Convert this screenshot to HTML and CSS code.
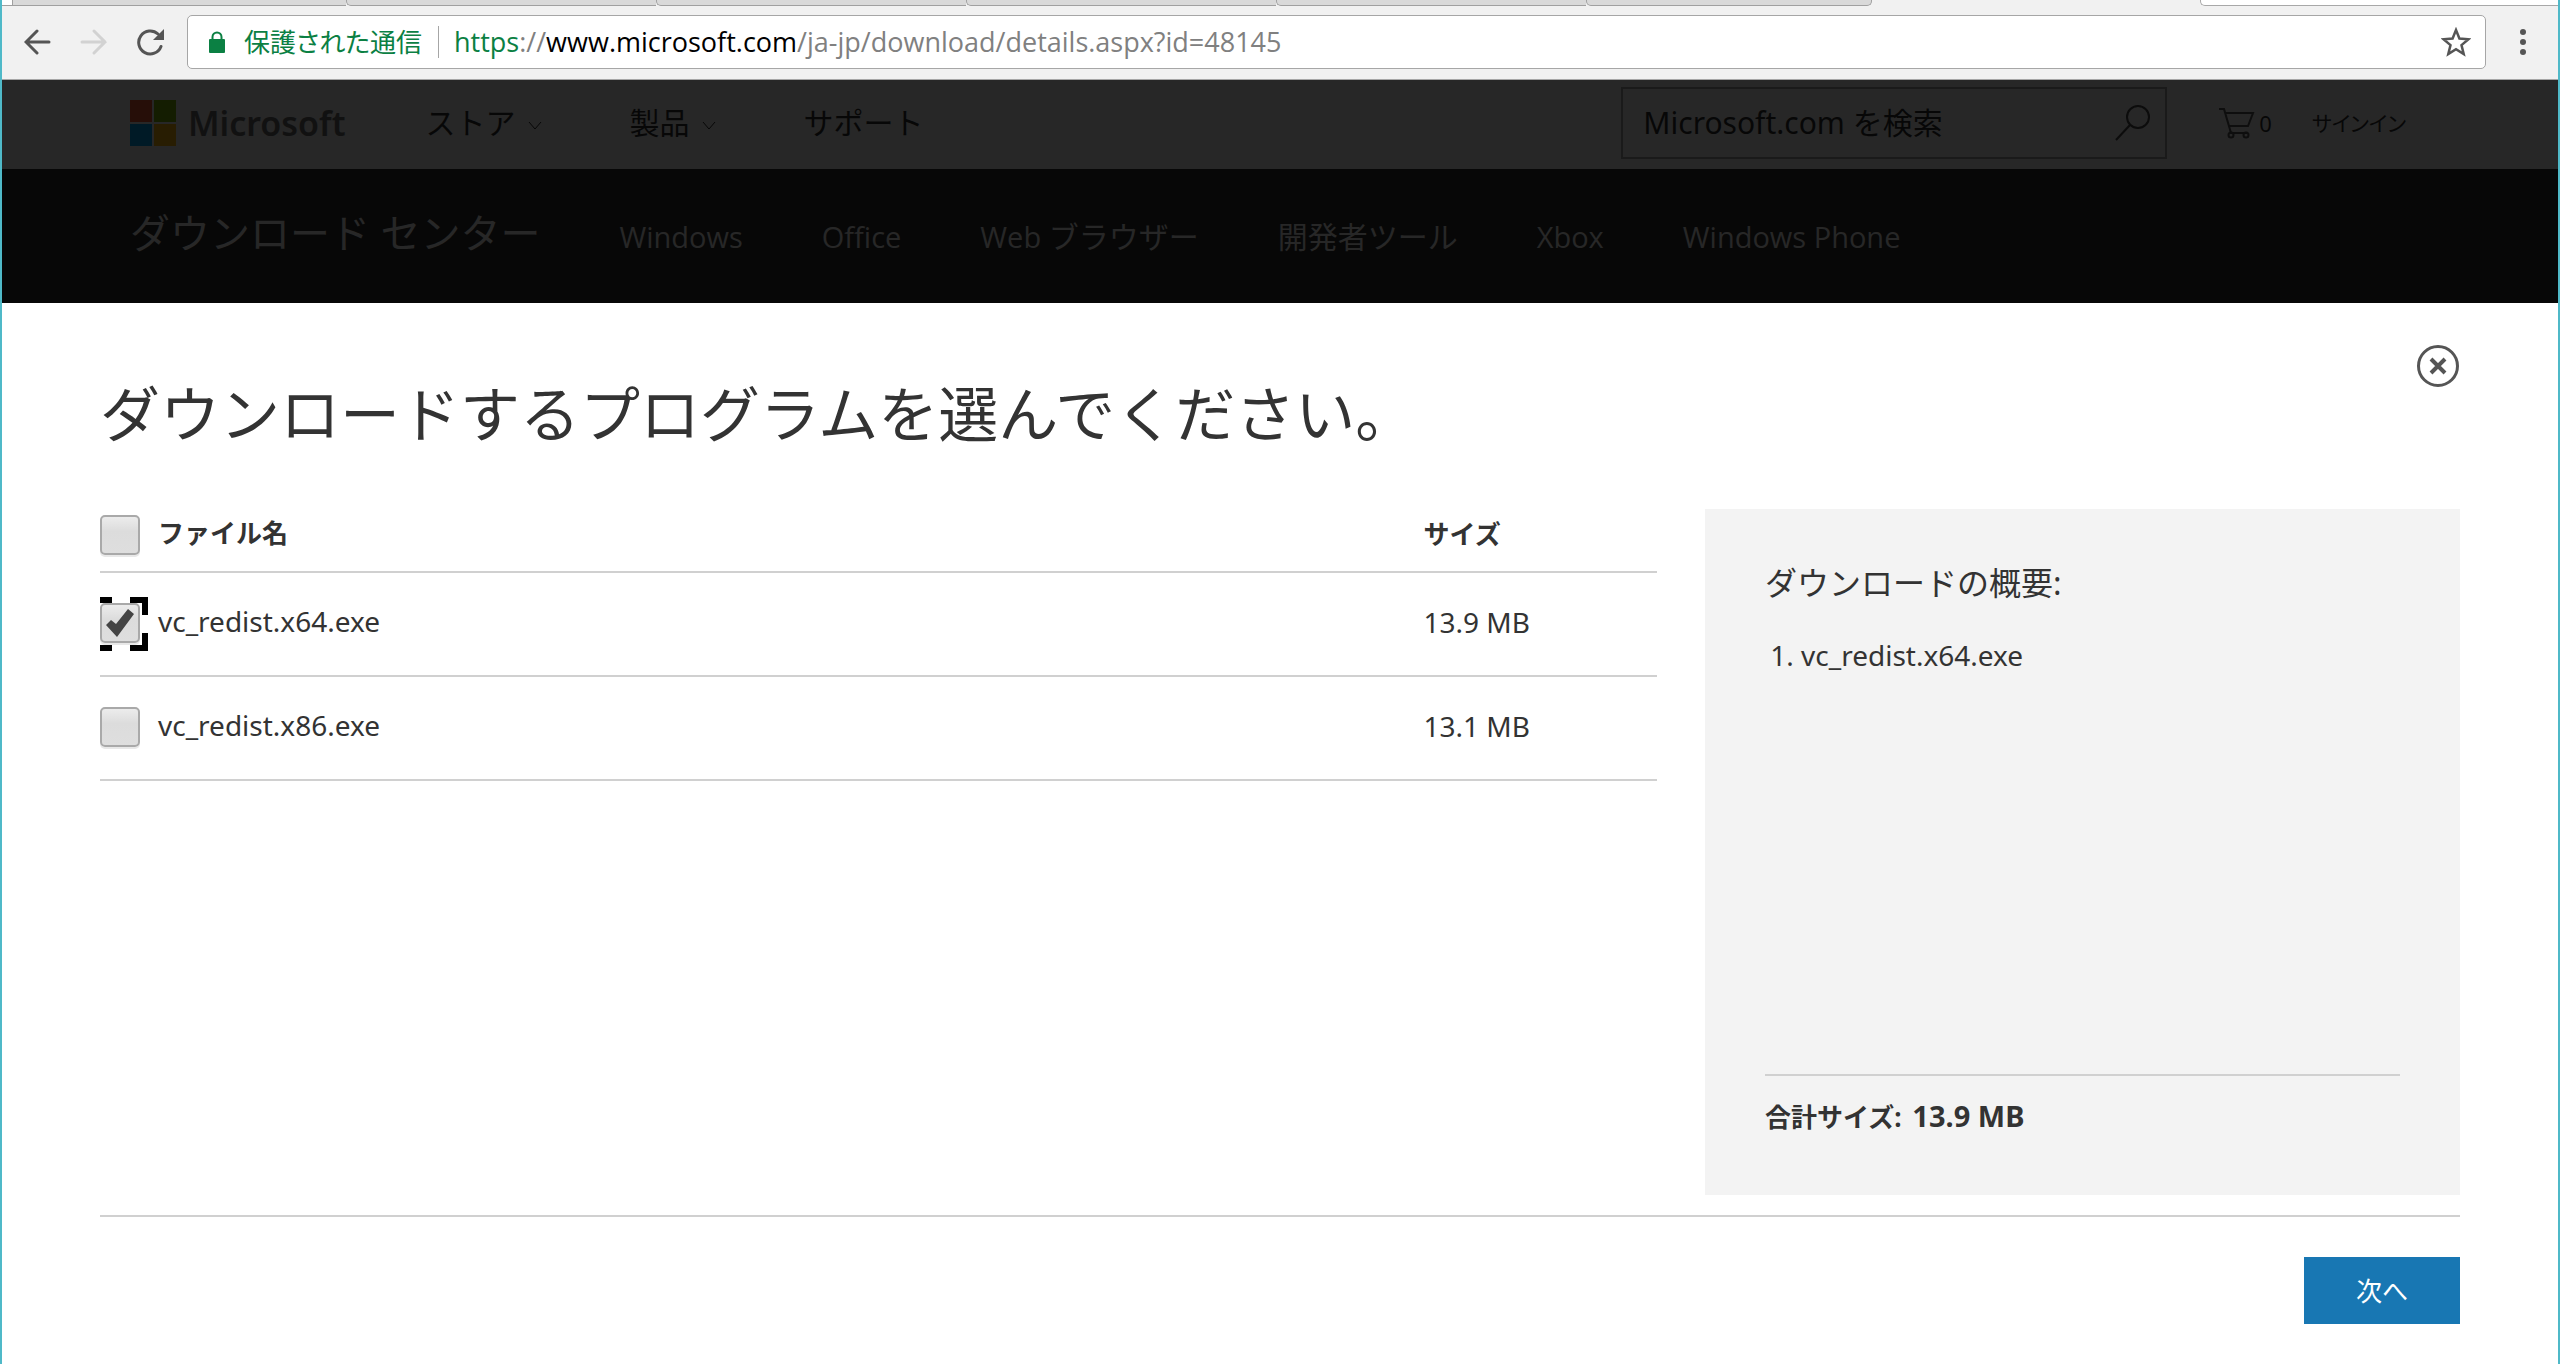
FILE: index.html
```html
<!DOCTYPE html>
<html lang="ja">
<head>
<meta charset="utf-8">
<title>ダウンロード センター</title>
<link rel="stylesheet" href="styles.css">
</head>
<body>
<div class="window">
  <div class="tabs" aria-hidden="true">
    <span class="tab-current"></span><span class="tab tab-first"></span><span class="tab"></span><span class="tab"></span><span class="tab"></span><span class="tab"></span><span class="tab tab-last"></span><span class="tab-gap"></span><span class="tab-new"></span>
  </div>
  <div class="toolbar">
    <div class="tools">
      <button type="button" aria-label="戻る"><svg width="28" height="28" viewBox="0 0 28 28"><path d="M25 14H3M13 3L2 14l11 11" fill="none" stroke="#555" stroke-width="3" stroke-linecap="round"/></svg></button>
      <button type="button" aria-label="進む"><svg width="28" height="28" viewBox="0 0 28 28"><path d="M2 14h23M14 3l11 11-11 11" fill="none" stroke="#d2d2d2" stroke-width="3" stroke-linecap="round"/></svg></button>
      <button type="button" aria-label="再読み込み"><svg width="28" height="28" viewBox="0 0 28 28"><path d="M25 18.500A11.500 11.500 0 1 1 22 6" fill="none" stroke="#555" stroke-width="3" stroke-linecap="round"/><path d="M28 1v11H17z" fill="#555"/></svg></button>
    </div>
    <div class="omnibox">
      <svg width="18" height="22" viewBox="0 0 18 22"><path d="M4.500 9V6a4.500 4.500 0 0 1 9 0v3" fill="none" stroke="#0b8043" stroke-width="2"/><path d="M1 9q0-1 1-1h14q1 0 1 1v12q0 1-1 1H2q-1 0-1-1z" fill="#0b8043"/></svg>
      <span class="secure">保護された通信</span>
      <span class="url"><span class="scheme">https</span>://<span class="host">www.microsoft.com</span>/ja-jp/download/details.aspx?id=48145</span>
      <button type="button" aria-label="ブックマーク"><svg width="30" height="30" viewBox="0 0 30 30"><path d="M15 3l3.400 8.500 9.100.700-7 5.900 2.200 8.900L15 22.200 7.300 27l2.200-8.900-7-5.900 9.100-.7z" fill="none" stroke="#555" stroke-width="2.500"/></svg></button>
    </div>
    <button type="button" aria-label="メニュー"><svg width="8" height="28" viewBox="0 0 8 28"><g fill="#555"><circle cx="4" cy="4" r="3"/><circle cx="4" cy="14" r="3"/><circle cx="4" cy="24" r="3"/></g></svg></button>
  </div>

  <header class="site">
    <a class="logo" href="#"><svg width="46" height="46" viewBox="0 0 46 46"><path d="M0 0h22v22H0z" fill="#260e08"/><path d="M24 0h22v22H24z" fill="#141d01"/><path d="M0 24h22v22H0z" fill="#001a26"/><path d="M24 24h22v22H24z" fill="#281d02"/></svg><span>Microsoft</span></a>
    <nav class="primary">
      <a href="#">ストア<svg width="14" height="10" viewBox="0 0 14 10"><path d="M1 1l6 7 6-7" fill="none" stroke="#070707"/></svg></a>
      <a href="#">製品<svg width="14" height="10" viewBox="0 0 14 10"><path d="M1 1l6 7 6-7" fill="none" stroke="#070707"/></svg></a>
      <a href="#">サポート</a>
    </nav>
    <form class="search">
      <input type="text" aria-label="検索" placeholder="Microsoft.com を検索">
      <button type="button" aria-label="検索"><svg width="36" height="36" viewBox="0 0 36 36"><circle cx="23" cy="12" r="11" fill="none" stroke="#0c0c0c" stroke-width="2"/><path d="M15 20L1 35" stroke="#0c0c0c" stroke-width="2"/></svg></button>
    </form>
    <a class="cart" href="#"><svg width="36" height="32" viewBox="0 0 36 32"><g fill="none" stroke="#0e0e0e" stroke-width="2"><path d="M0 2h5l7 24h17M6 6h28l-5 13H10"/><circle cx="12" cy="28" r="2.500"/><circle cx="27" cy="28" r="2.500"/></g></svg><span>0</span></a>
    <a class="signin" href="#">サインイン</a>
  </header>

  <nav class="center">
    <a class="center-title" href="#">ダウンロード センター</a>
    <a href="#">Windows</a>
    <a href="#">Office</a>
    <a href="#">Web <span class="ja">ブラウザー</span></a>
    <a href="#"><span class="ja">開発者ツール</span></a>
    <a href="#">Xbox</a>
    <a href="#">Windows Phone</a>
  </nav>

  <main class="dialog">
    <div class="close-row"><button type="button" aria-label="閉じる"><svg width="44" height="44" viewBox="0 0 44 44"><circle cx="22" cy="22" r="19.500" fill="none" stroke="#555" stroke-width="3"/><path d="M15 15l14 14M29 15L15 29" stroke="#555" stroke-width="4"/></svg></button></div>
    <h1>ダウンロードするプログラムを選んでください。</h1>
    <div class="columns">
      <table class="files">
        <thead>
          <tr><th><label><span class="tick"><input type="checkbox"></span>ファイル名</label></th><th class="size">サイズ</th></tr>
        </thead>
        <tbody>
          <tr><td><label><span class="tick"><input type="checkbox" checked><svg class="marks" width="48" height="54" viewBox="0 0 48 54"><path d="M0 0h12v6H0zM30 0h18v18h-6V6H30zM42 36h6v18H30v-6h12zM0 48h12v6H0z"/><path d="M6 28l5-5 5 4L28 12l6 5-17 23z" fill="#444"/></svg></span>vc_redist.x64.exe</label></td><td>13.9 MB</td></tr>
          <tr><td><label><span class="tick"><input type="checkbox"></span>vc_redist.x86.exe</label></td><td>13.1 MB</td></tr>
        </tbody>
      </table>
      <aside class="summary">
        <h2>ダウンロードの概要:</h2>
        <ol><li>vc_redist.x64.exe</li></ol>
        <p class="total">合計サイズ: <span class="amount">13.9 MB</span></p>
      </aside>
    </div>
    <div class="actions"><button class="next" type="button">次へ</button></div>
  </main>
</div>
</body>
</html>
```
FILE: styles.css
```css
* { box-sizing: border-box; }

body {
  margin: 0;
  background: #fff;
  color: #333;
  font: 26px/40px "Noto Sans", "Noto Sans CJK JP", sans-serif;
}

a { color: inherit; text-decoration: none; }
button { padding: 0; border: 0; background: none; font: inherit; }
svg { display: block; flex: none; }

.window {
  display: flex;
  flex-direction: column;
  min-height: 100vh;
  border: solid #4fb9c8;
  border-width: 0 2px;
  box-shadow: inset 0 -1px #1c1c1c;
}

/* Browser frame */
.tabs {
  display: flex;
  height: 6px;
  background: #f1f1f1;
}
.tab {
  flex: 0 0 310px;
  background: #d9d9d9;
  border: solid #a0a0a0;
  border-width: 0 0 1px 1px;
  border-bottom-left-radius: 5px;
}
.tab-current { flex: 0 0 10px; background: #fff; border-bottom: 1px solid #a0a0a0; }
.tab-first { flex-basis: 334px; border-radius: 0; }
.tab-last { flex-basis: 286px; border-right-width: 1px; border-bottom-right-radius: 5px; }
.tab-gap { flex: 0 0 328px; }
.tab-new {
  flex: 1;
  background: #fff;
  border: solid #a8a8a8;
  border-width: 0 0 1px 1px;
  border-bottom-left-radius: 5px;
}

.toolbar {
  display: flex;
  align-items: center;
  height: 74px;
  padding: 0 31px 2px 22px;
  background: #f1f1f1;
  border-bottom: 1px solid #a6a6a6;
}
.tools { display: flex; gap: 28px; margin-right: 23px; }
.omnibox {
  display: flex;
  flex: 1;
  align-items: center;
  height: 54px;
  margin-right: 33px;
  padding: 0 14px 0 20px;
  background: #fff;
  border: 1px solid #a6a6a6;
  border-radius: 5px;
}
.secure {
  margin-left: 18px;
  padding-right: 16px;
  border-right: 1px solid #a6a6a6;
  color: #0b8043;
  line-height: 32px;
  font-feature-settings: "palt";
}
.url {
  flex: 1;
  margin-left: 15px;
  color: #808080;
  font-family: "Open Sans", sans-serif;
  font-size: 27px;
}
.scheme { color: #0b8043; }
.host { color: #000; }

/* Site header */
.site {
  display: flex;
  align-items: center;
  height: 89px;
  padding: 0 152px 3px 128px;
  background: #272727;
  color: #070707;
  font-size: 30px;
}
.logo {
  display: flex;
  align-items: center;
  gap: 12px;
  color: #111;
  font-size: 34px;
  font-weight: 600;
}
.primary { display: flex; flex: 1; gap: 88px; margin-left: 80px; }
.primary a { display: flex; align-items: center; gap: 12px; }
.primary svg { margin-top: 6px; }
.search {
  display: flex;
  align-items: center;
  width: 546px;
  height: 72px;
  padding: 0 14px 0 20px;
  border: 2px solid #1a1a1a;
}
.search input {
  flex: 1;
  min-width: 0;
  padding: 0;
  border: 0;
  background: none;
  font: inherit;
}
.search input::placeholder { color: #070707; }
.cart { display: flex; align-items: center; gap: 4px; margin-left: 52px; font-size: 22px; }
.signin { margin-left: 40px; font-size: 21px; font-feature-settings: "palt"; }

.center {
  display: flex;
  align-items: baseline;
  gap: 79px;
  height: 134px;
  padding: 44px 128px 0;
  background: #070707;
  color: #272727;
  font-family: "Open Sans", "Noto Sans CJK JP", sans-serif;
  font-size: 29px;
}
.center-title { font-size: 40px; }
.ja { font-size: 30px; }

/* Download picker */
.dialog { padding: 41px 98px; }
.close-row { display: flex; justify-content: flex-end; }
h1 { margin: 0 0 69px; font-size: 60px; line-height: 52px; font-weight: 400; }
h2 { margin: 0; font-size: 32px; line-height: 48px; font-weight: 400; }

.columns {
  display: grid;
  grid-template-columns: 66fr 32fr;
  gap: 48px;
  padding-bottom: 20px;
  border-bottom: 2px solid #d0d0d0;
}
.files {
  align-self: start;
  width: 100%;
  border-spacing: 0;
  text-align: left;
}
.files th, .files td { border-bottom: 2px solid #d0d0d0; }
.files th { height: 64px; padding: 4px 0 16px; }
.files td { height: 104px; padding: 0 0 4px; font-size: 28px; }
.files .size { width: 15%; }
.files label { display: flex; gap: 18px; }
.tick { position: relative; display: flex; margin-top: 2px; }
.tick input {
  appearance: none;
  width: 40px;
  height: 40px;
  margin: 0;
  border: 2px solid #a9a9a9;
  border-radius: 5px;
  background: linear-gradient(#ececec, #dcdcdc 40%, #dedede);
  box-shadow: 0 2px #e8e8e8;
}
.marks { position: absolute; left: 0; top: -6px; }

.summary {
  display: flex;
  flex-direction: column;
  min-height: 686px;
  padding: 50px 60px 58px;
  background: #f3f3f3;
}
.summary ol { flex: 1; margin: 28px 0; padding-left: 36px; font-size: 28px; }
.total {
  margin: 0;
  padding-top: 20px;
  border-top: 2px solid #d0d0d0;
  font-weight: 700;
}
.amount { margin-left: 4px; font-size: 29px; }
.actions { display: flex; justify-content: flex-end; padding-top: 40px; }
.next { width: 156px; height: 67px; background: #1877b3; color: #fff; }
```
